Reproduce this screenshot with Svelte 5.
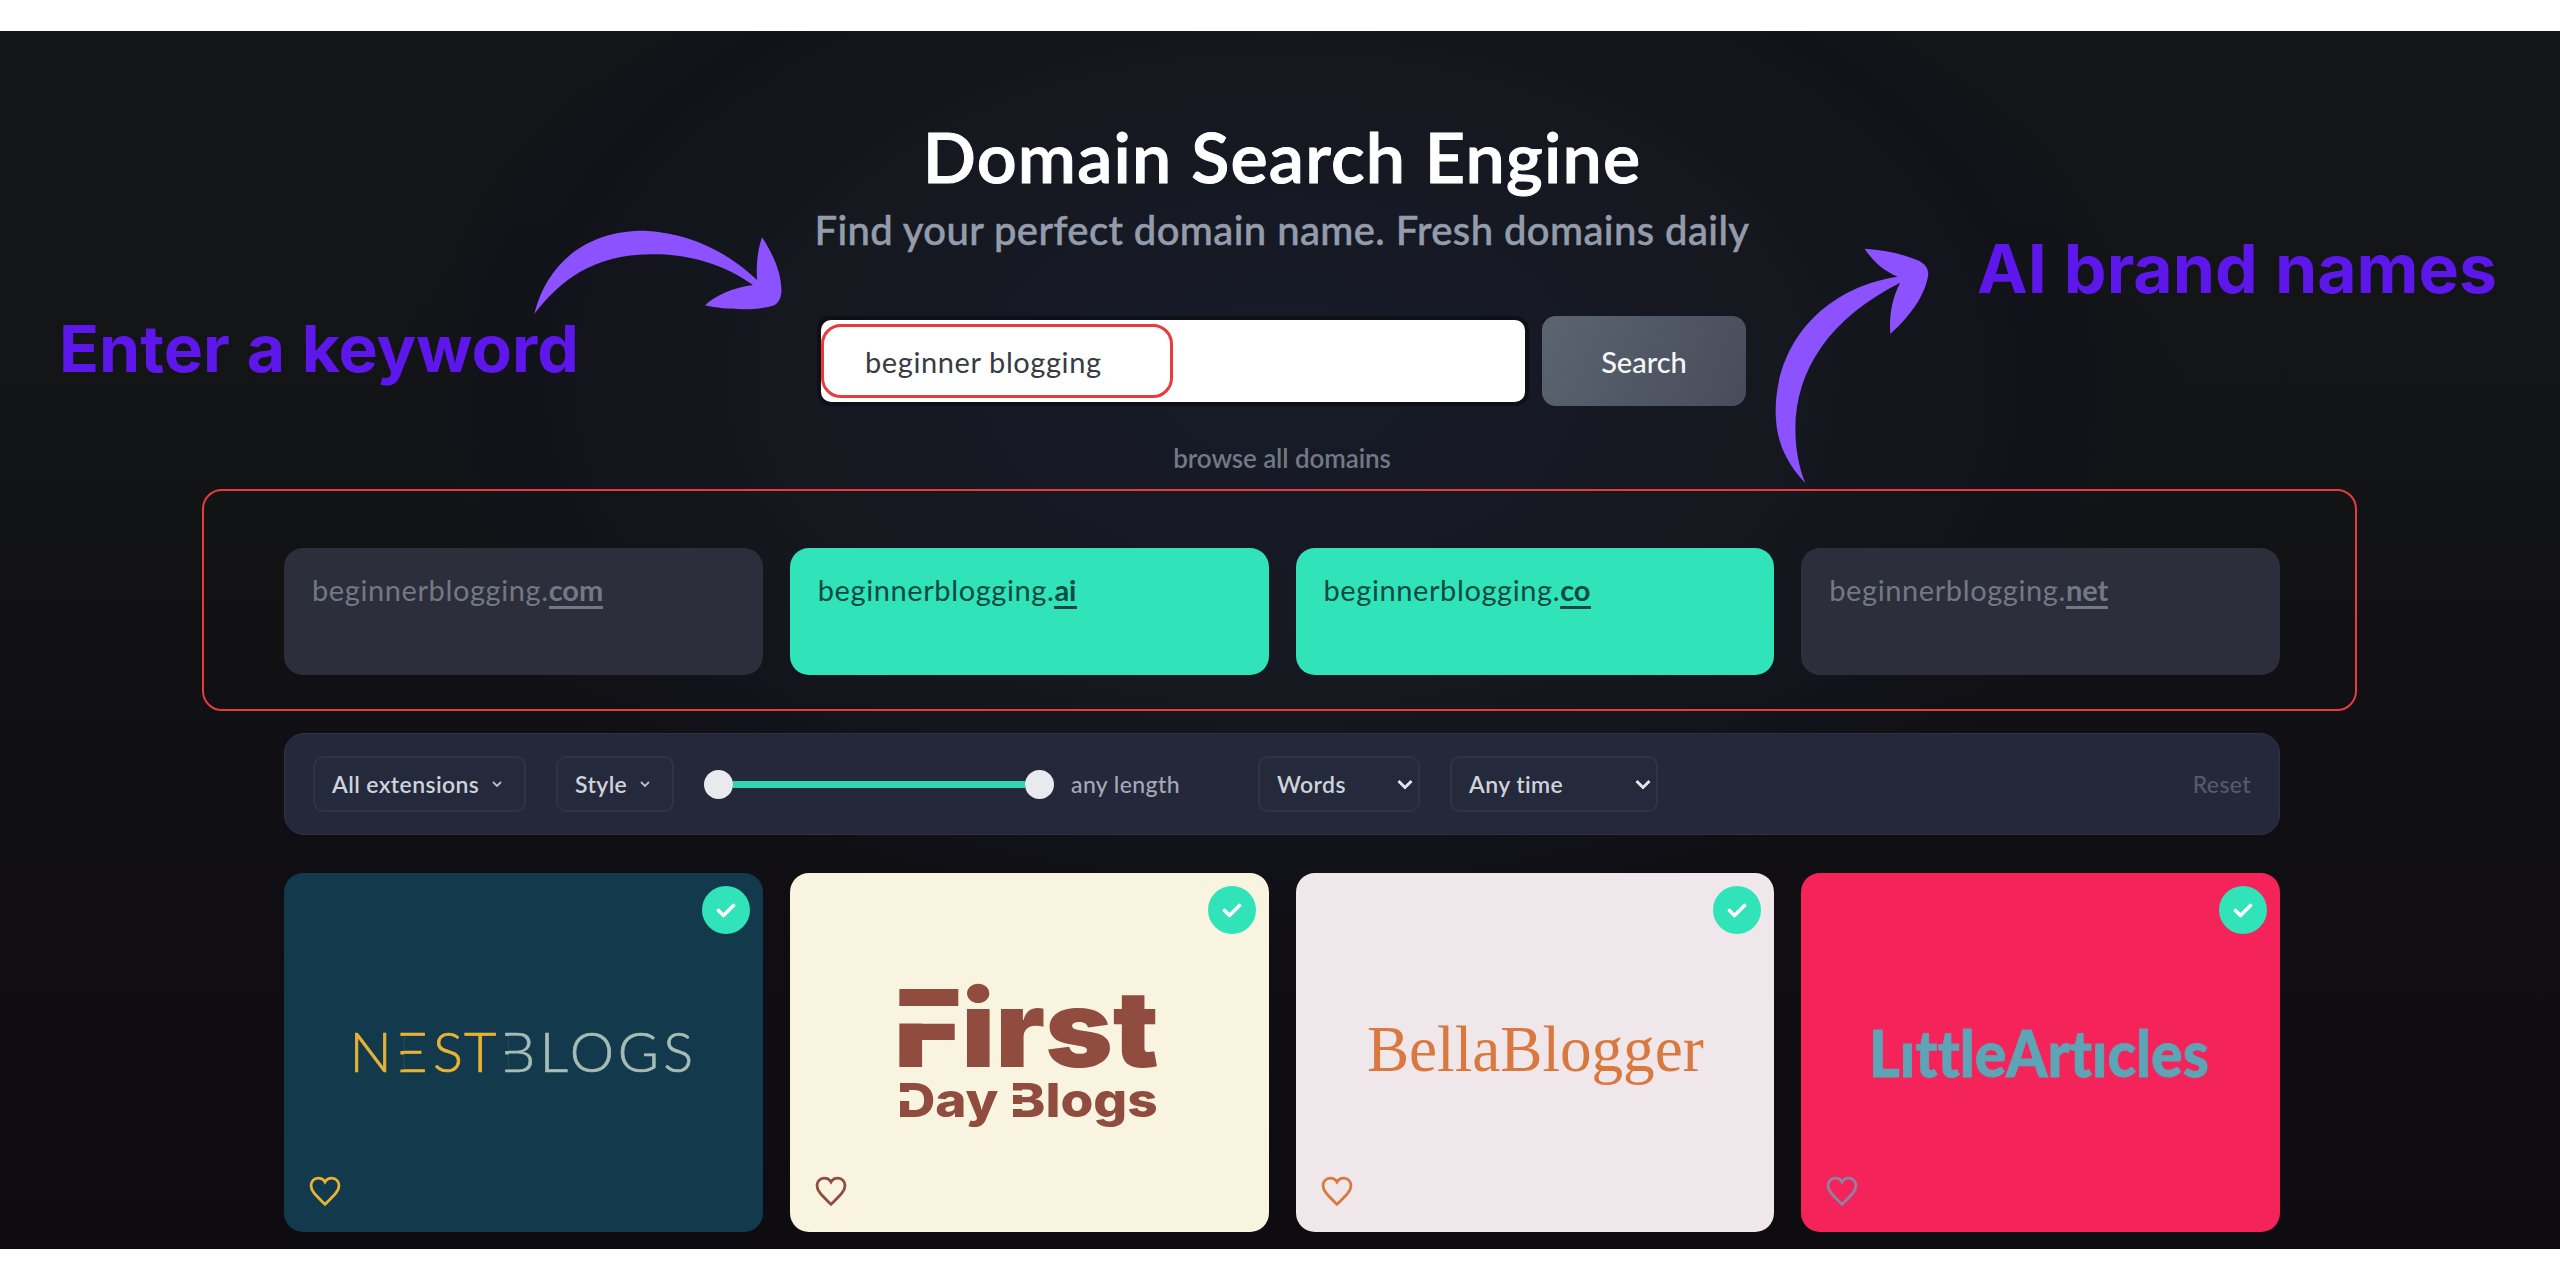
<script lang="ts">
  const domains = [
    { name: "beginnerblogging", ext: "com", free: false },
    { name: "beginnerblogging", ext: "ai", free: true },
    { name: "beginnerblogging", ext: "co", free: true },
    { name: "beginnerblogging", ext: "net", free: false },
  ];

  const brands = ["nest", "first", "bella", "little"];
</script>

<div class="stage">
  <header>
    <h1>Domain Search Engine</h1>
    <p class="subtitle">Find your perfect domain name. Fresh domains daily</p>
    <div class="search">
      <div class="field"><span class="keyword">beginner blogging</span></div>
      <button class="submit">Search</button>
    </div>
    <a class="browse" href="#all">browse all domains</a>
  </header>

  <section class="grid domains">
    {#each domains as domain}
      <div class="domain" class:free={domain.free}>
        <span class="name">{domain.name}.</span><b>{domain.ext}</b>
      </div>
    {/each}
  </section>

  <section class="filters">
    <div class="pill extensions">
      <span>All extensions</span>
      <svg width="10" height="8" viewBox="0 0 10 8"><path d="M1 2l4 4 4-4" /></svg>
    </div>
    <div class="pill style">
      <span>Style</span>
      <svg width="10" height="8" viewBox="0 0 10 8"><path d="M1 2l4 4 4-4" /></svg>
    </div>
    <div class="length">
      <div class="slider">
        <i class="knob"></i>
        <i class="track"></i>
        <i class="knob"></i>
      </div>
      <span>any length</span>
    </div>
    <div class="pill select words">
      <span>Words</span>
      <svg width="16" height="11" viewBox="0 0 16 11"><path d="M1.500 2l6.500 6.500 6.500-6.500" /></svg>
    </div>
    <div class="pill select time">
      <span>Any time</span>
      <svg width="16" height="11" viewBox="0 0 16 11"><path d="M1.500 2l6.500 6.500 6.500-6.500" /></svg>
    </div>
    <span class="reset">Reset</span>
  </section>

  <section class="grid brands">
    {#each brands as brand}
      <article class="card {brand}">
        <svg class="logo" viewBox="0 0 479 359">
          {#if brand === "nest"}
            <text class="gold" y="199.500" x="65.500 111 149 180">NEST</text>
            <text class="pale" y="199.500" x="216 256 286 334 379.500">BLOGS</text>
            <!-- the E and the B have no stem -->
            <path class="cut" d="M112 163h8v15h-8zM112 181.500h8v15h-8zM216 163h9v15h-9zM216 181.500h9v15h-9z" />
          {:else if brand === "first"}
            <text class="big" x="104" y="194.500" textLength="265" lengthAdjust="spacingAndGlyphs">First</text>
            <text class="small" x="107" y="244.500" textLength="261" lengthAdjust="spacingAndGlyphs">Day Blogs</text>
            <path class="cut" d="M104 133h65v17.500h-65zM104 219h19v9h-19zM217 217.500h17v4.500h-17zM217 231h17v5h-17z" />
          {:else if brand === "bella"}
            <text x="71" y="198" textLength="337" lengthAdjust="spacingAndGlyphs">BellaBlogger</text>
          {:else}
            <text x="68" y="204" textLength="340" lengthAdjust="spacingAndGlyphs">LıttleArtıcles</text>
          {/if}
        </svg>
        <div class="badge">
          <svg width="20" height="15" viewBox="0 0 20 15"><path d="M2.500 7.500l5 5 10-10" /></svg>
        </div>
        <svg class="heart" width="32" height="31" viewBox="0 0 32 31">
          <path d="M16 28.300C8 20.500 2 15.500 2 9.500C2 5.500 5 2.200 9 2.200C12 2.200 14.500 3.500 16 6C17.500 3.500 20 2.200 23 2.200C27 2.200 30 5.500 30 9.500C30 15.500 24 20.500 16 28.300Z" />
        </svg>
      </article>
    {/each}
  </section>

  <!-- callouts drawn over the page -->
  <div class="frame keyword-frame"></div>
  <div class="frame results-frame"></div>
  <svg class="notes" width="2560" height="1280" viewBox="0 0 2560 1280">
    <text x="59" y="372.300" font-size="65" textLength="520" lengthAdjust="spacingAndGlyphs">Enter a keyword</text>
    <text x="1977" y="292.700" font-size="67" textLength="520" lengthAdjust="spacingAndGlyphs">AI brand names</text>
    <path d="M534.300 314C547 262 588 230 645 230.700C692 233 730 254 757 280C756 263 758 249 762 237.300C773 254 781 272 781.500 290C781.500 298 778 304 773.500 305.500C756 311 725 310 705 305.300C716 295 732 288 753 285C724 264 686 253 650 254.300C594 255 560 280 534.300 314Z" />
    <path d="M1805.300 483.300C1784 460 1775 438 1775.700 408C1777 342 1824 288 1897.500 276.700C1882 270 1872 260 1864.600 248.700C1885 250 1903 254 1919.400 261C1926 265 1928.500 269 1928.200 275C1925 296 1910 316 1890.300 334C1889 316 1892 298 1900.200 282.700C1830 318 1795 370 1795.400 430C1795.500 450 1799 467 1805.300 483.300Z" />
  </svg>
</div>

<style>
  :global(body) {
    margin: 0;
    background: #fff;
  }

  .stage {
    position: relative;
    box-sizing: border-box;
    height: 1218px;
    margin-top: 31px;
    padding: 85px 280px 0 284px;
    overflow: hidden;
    font-family: Lato, "Open Sans", sans-serif;
    font-variant-ligatures: none;
    background:
      radial-gradient(ellipse 900px 560px at 1282px 350px, #171b29 0, #15181f 55%, #12131b 80%, transparent 100%),
      linear-gradient(#141516 0, #131416 35%, #100f13 60%, #0f0c11 100%);
  }

  header {
    display: flex;
    flex-direction: column;
    align-items: center;
  }

  h1 {
    margin: 0;
    color: #fff;
    font-size: 70px;
    font-weight: 600;
    line-height: 80px;
    letter-spacing: 1.2px;
    white-space: nowrap;
    -webkit-text-stroke: 1px #fff;
  }

  .subtitle {
    margin: 9px 0 0;
    color: #949cab;
    font-size: 40px;
    font-weight: 500;
    line-height: 50px;
    letter-spacing: 0.4px;
    white-space: nowrap;
    -webkit-text-stroke: 0.5px #949cab;
  }

  .search {
    display: flex;
    align-items: center;
    gap: 17px;
    width: 925px;
    height: 90px;
    margin: 61px 0 0 3px;
  }

  .field {
    display: flex;
    align-items: center;
    box-sizing: border-box;
    width: 704px;
    height: 82px;
    padding-left: 44px;
    border-radius: 10px;
    background: #fff;
    box-shadow: 0 0 0 4px #0f1017;
    color: #373b42;
    font-size: 29px;
    letter-spacing: 0.6px;
  }

  .submit {
    width: 204px;
    height: 90px;
    padding: 0;
    border: 0;
    border-radius: 14px;
    background: linear-gradient(115deg, #5b6470, #474c5a);
    color: #f6f7f9;
    font: 500 29px Lato, sans-serif;
  }

  .browse {
    margin-top: 36px;
    color: #727884;
    font-size: 26px;
    font-weight: 600;
    line-height: 32px;
    letter-spacing: -0.1px;
    text-decoration: none;
  }

  .grid {
    display: grid;
    grid-template-columns: repeat(4, 1fr);
    gap: 27px;
  }

  .domains {
    margin-top: 74px;
  }

  .domain {
    box-sizing: border-box;
    height: 127px;
    padding: 23px 28px;
    border-radius: 19px;
    background: #2c2e3b;
    color: #747884;
    font-size: 29px;
    line-height: 38px;
  }

  .domain .name {
    letter-spacing: 0.6px;
  }

  .domain b {
    border-bottom: 3px solid;
    display: inline-block;
    line-height: 33px;
  }

  .domain.free {
    background: #30e3b9;
    color: #0c4a42;
  }

  .filters {
    display: flex;
    align-items: center;
    gap: 30px;
    box-sizing: border-box;
    height: 102px;
    margin-top: 58px;
    padding: 0 28px;
    border: 1px solid #2f3240;
    border-radius: 20px;
    background: #25283a;
    color: #ced2da;
    font-size: 23px;
    font-weight: 600;
    letter-spacing: 0.4px;
  }

  .pill {
    display: flex;
    align-items: center;
    justify-content: space-between;
    box-sizing: border-box;
    height: 56px;
    padding: 0 22px 0 17px;
    border: 2px solid #2f3445;
    border-radius: 10px;
    background: #24293c;
  }

  .pill svg {
    fill: none;
    stroke: #b9bdc8;
    stroke-width: 1.8;
  }

  .select {
    padding-right: 5px;
  }

  .select svg {
    stroke: #e2e5ea;
    stroke-width: 3;
  }

  .extensions {
    width: 213px;
  }

  .style {
    width: 118px;
  }

  .words {
    width: 162px;
  }

  .time {
    width: 208px;
  }

  .length {
    display: flex;
    align-items: center;
    gap: 17px;
    width: 524px;
    color: #a4a9b5;
    font-weight: 500;
  }

  .slider {
    display: flex;
    align-items: center;
    width: 350px;
  }

  .knob {
    width: 29px;
    height: 29px;
    border-radius: 50%;
    background: #e8eaee;
  }

  .track {
    flex: 1;
    height: 7px;
    background: #30d5b0;
  }

  .reset {
    margin-left: auto;
    color: #555a69;
    font-weight: 500;
  }

  .brands {
    margin-top: 38px;
  }

  .card {
    position: relative;
    height: 359px;
    border-radius: 19px;
    overflow: hidden;
  }

  .logo {
    display: block;
    width: 100%;
    height: 100%;
  }

  .badge {
    position: absolute;
    top: 13px;
    right: 13px;
    display: flex;
    align-items: center;
    justify-content: center;
    width: 48px;
    height: 48px;
    border-radius: 50%;
    background: #30e3b9;
  }

  .badge path {
    fill: none;
    stroke: #fff;
    stroke-width: 3.6;
    stroke-linecap: round;
    stroke-linejoin: round;
  }

  .heart {
    position: absolute;
    left: 25px;
    bottom: 25px;
    fill: none;
    stroke: currentColor;
    stroke-width: 2.8;
  }

  .nest {
    background: #123a4c;
    color: #e8b335;
    font: 300 56px Lato, sans-serif;
  }

  .gold {
    fill: #e8b335;
    stroke: #e8b335;
    stroke-width: 0.7;
  }

  .pale {
    fill: #a6bcb6;
    stroke: #a6bcb6;
    stroke-width: 0.7;
  }

  .nest .cut {
    fill: #123a4c;
  }

  .first {
    background: #f9f4e0;
    color: #8f4c3f;
    fill: currentColor;
    font-family: Inter, sans-serif;
  }

  .first .cut {
    fill: #f9f4e0;
  }

  .big {
    font-size: 107px;
    font-weight: 900;
  }

  .small {
    font-size: 47px;
    font-weight: 800;
  }

  .bella {
    background: #efe7ea;
    color: #d9783f;
    font: 65px "Liberation Serif", serif;
  }

  .bella .logo {
    fill: currentColor;
  }

  .little {
    background: #f42359;
    color: #5da5b6;
    font-size: 65px;
    font-weight: 900;
  }

  .little .logo {
    fill: currentColor;
  }

  .little text {
    stroke: currentColor;
    stroke-width: 0.8;
  }

  .little .heart {
    color: #8c83a3;
  }

  .frame {
    position: absolute;
    box-sizing: border-box;
    border: 3px solid #e93a3c;
  }

  .keyword-frame {
    left: 821px;
    top: 293px;
    width: 352px;
    height: 74px;
    border-radius: 20px;
  }

  .results-frame {
    left: 202px;
    top: 458px;
    width: 2155px;
    height: 222px;
    border-width: 2px;
    border-radius: 20px;
  }

  .notes {
    position: absolute;
    left: 0;
    top: -31px;
    fill: #8c52ff;
  }

  .notes text {
    fill: #5e17eb;
    font-family: Inter, sans-serif;
    font-weight: 700;
    word-spacing: 1px;
  }
</style>
